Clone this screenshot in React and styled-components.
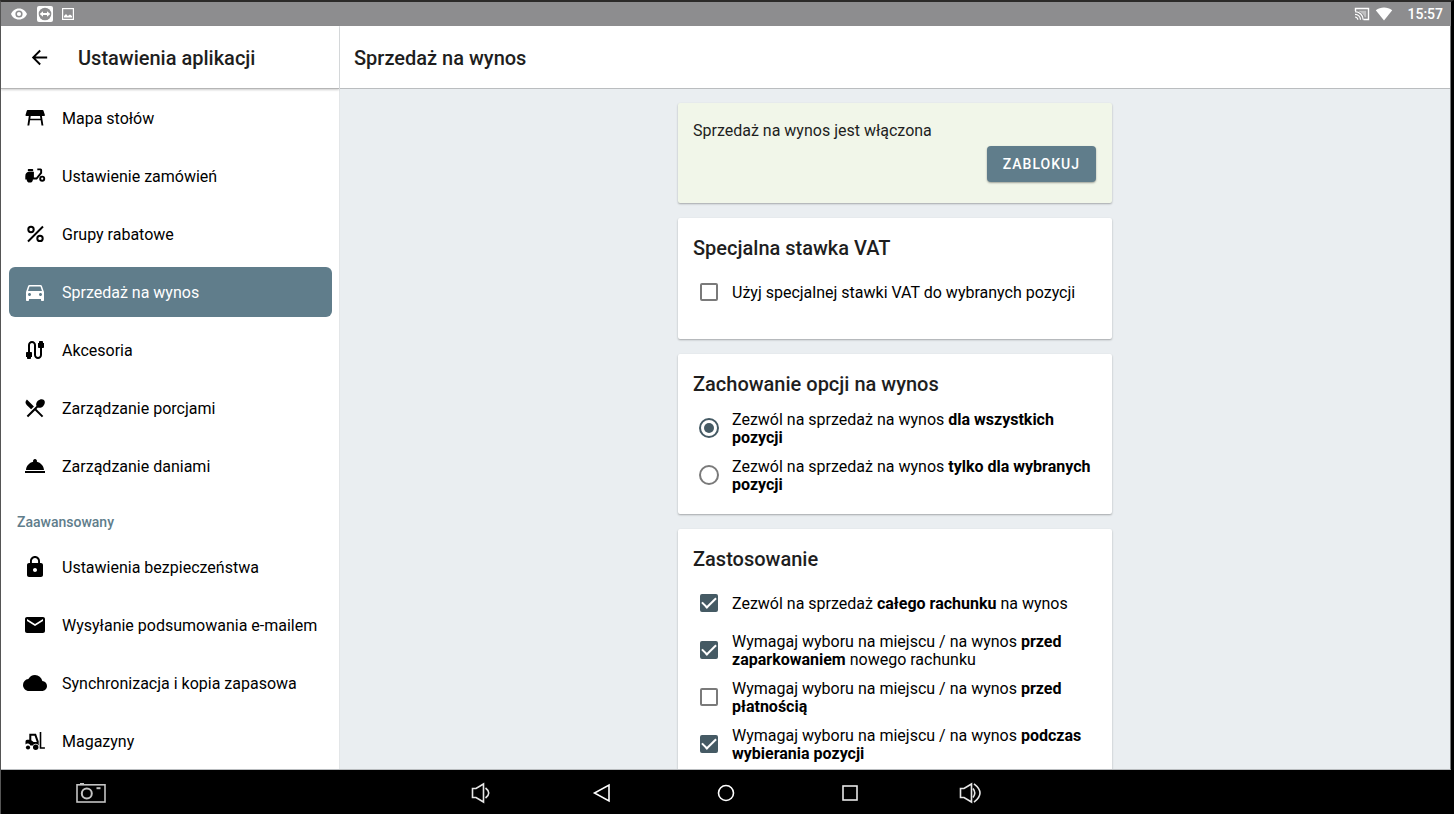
import React, { useState } from 'react';
import styled, { createGlobalStyle } from 'styled-components';
import {
    MdArrowBack,
    MdCable,
    MdCloud,
    MdDirectionsCar,
    MdEmail,
    MdLocalDining,
    MdLock,
    MdRoomService,
} from 'react-icons/md';

// STYLES
const GlobalStyle = createGlobalStyle`
    * {
        box-sizing: border-box;
    }
    body {
        margin: 0;
        background: black;
        font-family: Roboto, "Liberation Sans", sans-serif;
        font-size: 16px;
        color: black;
    }
`

const Screen = styled.div`
    height: 100vh;
    display: flex;
    flex-direction: column;
    overflow: hidden;
    border-top: 2px solid #2b2a29;
    border-left: 1px solid #555555;
    border-right: 3px solid black;
`

const StatusBar = styled.div`
    flex: none;
    height: 24px;
    padding: 0 8px 0 9px;
    display: flex;
    align-items: center;
    background: #8d8d8f;
    color: white;

    svg {
        display: block;
    }
`

const StatusIcons = styled.div`
    display: flex;
    align-items: center;
    gap: ${props => props.$gap}px;
`

const Clock = styled.time`
    font-size: 14px;
    font-weight: 500;
    line-height: 24px;
    margin-left: 14px;
`

const Spacer = styled.div`
    flex: 1;
`

const Body = styled.div`
    flex: 1;
    min-height: 0;
    display: flex;
    border-right: 1px solid #77797a;
    border-bottom: 1px solid #b9bcbf;
`

const Sidebar = styled.aside`
    flex: none;
    width: 339px;
    display: flex;
    flex-direction: column;
    background: white;
    border-right: 1px solid #e3e6e8;
`

const SidebarHeader = styled.header`
    flex: none;
    height: 63px;
    padding: 0 26px;
    display: flex;
    align-items: center;
    gap: 26px;
    border-bottom: 1px solid #b5b5b5;
    box-shadow: 0 1px 2px rgba(0, 0, 0, 0.2);
`

const BackButton = styled.button`
    width: 25px;
    height: 24px;
    padding: 0;
    border: 0;
    background: none;
    color: black;
    font-size: 23px;
    display: flex;
    align-items: center;
    justify-content: center;
`

const Title = styled.h1`
    margin: 0;
    padding-top: 2px;
    font-size: 20px;
    font-weight: 500;
    line-height: 24px;
    color: #1e1e1e;
`

const Menu = styled.nav`
    flex: 1;
    min-height: 0;
    overflow: hidden;
    padding: 4px 7px 4px 8px;
    display: flex;
    flex-direction: column;
    gap: 8px;
`

const MenuItem = styled.a`
    flex: none;
    height: 50px;
    padding: 0 14px;
    display: flex;
    align-items: center;
    gap: 15px;
    border-radius: 6px;
    text-decoration: none;
    white-space: nowrap;
    color: ${props => props.$active ? 'white' : 'black'};
    background: ${props => props.$active ? '#607d8b' : 'none'};

    svg {
        flex: none;
        width: 24px;
        height: 24px;
    }
`

const MenuHeading = styled.h2`
    flex: none;
    margin: 0;
    padding: 13px 8px 2px;
    font-size: 14px;
    font-weight: 500;
    line-height: 20px;
    color: #607d8b;
`

const Main = styled.main`
    flex: 1;
    min-width: 0;
    display: flex;
    flex-direction: column;
    background: #eaeef1;
`

const MainHeader = styled.header`
    flex: none;
    height: 63px;
    padding: 0 14px;
    display: flex;
    align-items: center;
    background: white;
    border-bottom: 1px solid #babdbf;
`

const Cards = styled.div`
    flex: 1;
    min-height: 0;
    overflow: hidden;
    padding-top: 14px;
    display: flex;
    flex-direction: column;
    align-items: center;
    gap: 15px;
`

const Card = styled.section`
    flex: none;
    width: 100%;
    max-width: 434px;
    padding: 15px 16px ${props => props.$bottom || 16}px 15px;
    border-radius: 2px;
    background: ${props => props.$green ? '#f1f6e9' : 'white'};
    box-shadow: 0 1px 2px rgba(0, 0, 0, 0.3);
`

const CardTitle = styled.h2`
    margin: 0 0 5px;
    font-size: 20px;
    font-weight: 500;
    line-height: 30px;
    color: #1e1e1e;
`

const StatusText = styled.p`
    margin: 0;
    line-height: 26px;
    color: #1e1e1e;
`

const Actions = styled.div`
    display: flex;
    justify-content: flex-end;
    margin-top: 2px;
`

const Button = styled.button`
    height: 36px;
    padding: 0 16px;
    border: 0;
    border-radius: 4px;
    background: #607d8b;
    color: white;
    font-family: inherit;
    font-size: 14px;
    font-weight: 500;
    letter-spacing: 1px;
    text-transform: uppercase;
    box-shadow: 0 1px 2px rgba(0, 0, 0, 0.35);
`

const Option = styled.label`
    min-height: 47px;
    padding-left: 6px;
    display: flex;
    align-items: center;
    gap: 13px;
    line-height: 18px;

    span {
        padding-top: 2px;
    }
    b {
        font-weight: 700;
    }
`

const Checkbox = styled.input`
    appearance: none;
    flex: none;
    display: grid;
    place-items: center;
    width: 18px;
    height: 18px;
    margin: 0 1px;
    border: 2px solid #7a7a7a;
    border-radius: 2px;
    background: white;

    &:checked {
        border-color: #455a64;
        background: #455a64;
    }
    &:checked::before {
        content: '';
        width: 12px;
        height: 6px;
        margin-bottom: 4px;
        border-left: 2px solid white;
        border-bottom: 2px solid white;
        transform: rotate(-45deg);
    }
`

const Radio = styled.input`
    appearance: none;
    flex: none;
    display: grid;
    place-items: center;
    width: 20px;
    height: 20px;
    margin: 0;
    border: 2px solid #7a7a7a;
    border-radius: 50%;

    &:checked {
        border-color: #455a64;
    }
    &:checked::before {
        content: '';
        width: 10px;
        height: 10px;
        border-radius: 50%;
        background: #455a64;
    }
`

const NavBar = styled.footer`
    flex: none;
    height: 44px;
    display: grid;
    grid-template-columns: 1fr auto 1fr;
    align-items: center;
    padding: 2px 60px 0;
    background: black;
`

const NavKeys = styled.div`
    display: grid;
    grid-template-columns: 116px repeat(3, 124px) 116px;
    justify-items: center;
`

const NavKey = styled.button`
    width: 60px;
    height: 32px;
    padding: 0;
    border: 0;
    background: none;
    display: flex;
    align-items: center;
    justify-content: center;
`

// ICONS
const TableIcon = () => (
    <svg viewBox="0 0 24 24" fill="currentColor" aria-hidden="true">
        <path d="M4.6 4h15q.7 0 .9.7l1.4 4.4q.2 1-.8 1H3.3q-1 0-.8-1l1.3-4.4q.2-.7.8-.7z" />
        <path d="M5.9 9.500h1.900l-.5 3.300h10.100l-.5-3.300h1.900L20.400 19.600h-1.900l-.8-5.300H7.100l-.8 5.300H4.400z" />
    </svg>
)

const ScooterIcon = () => (
    <svg viewBox="0 0 24 24" fill="currentColor" aria-hidden="true">
        <path d="M5.500 5h4q.7 0 .7.7v.8q0 .7-.7.7h-4q-.7 0-.7-.7v-.8q0-.7.7-.7z" />
        <path d="M6.500 7.800h4.400v5.700h2.300l4-4.900V6.300h-2.900V4.400h3.300q1.500 0 1.500 1.500v3.300L14 15.400H9.900a3.100 3.100 0 0 1-6.200 0H2.300v-3.200a4.400 4.400 0 0 1 4.200-4.400z" />
        <path fillRule="evenodd" d="M19.200 11.700a3 3 0 1 1 0 6 3 3 0 0 1 0-6zm0 1.900a1.100 1.100 0 1 0 0 2.200 1.100 1.100 0 0 0 0-2.200z" />
    </svg>
)

const PercentIcon = () => (
    <svg viewBox="0 0 24 24" fill="none" stroke="currentColor" strokeWidth="2" aria-hidden="true">
        <path d="M5 19.500L20 4.500" />
        <circle cx="8" cy="7.500" r="2.700" />
        <circle cx="17" cy="16.400" r="2.700" />
    </svg>
)

const ForkliftIcon = () => (
    <svg viewBox="0 0 24 24" fill="currentColor" aria-hidden="true">
        <path fillRule="evenodd" d="M6.300 4.800h6.700l2.700 7.400v4h-.3a3.500 3.500 0 0 0-5.700.2H7.400a2.900 2.900 0 0 0-4.900-1v-3q0-1.600 1.600-1.600h2.200zM8.300 6.700v4.500l2.300 1.900h3.200l-2.200-6.400z" />
        <circle cx="5" cy="18.500" r="2.100" />
        <circle cx="12.700" cy="18.200" r="2.700" />
        <path d="M16.700 3h1.600v15.200h3.600v1.500h-5.200z" />
    </svg>
)

const EyeIcon = () => (
    <svg width="18" height="18" viewBox="0 0 18 18" fill="currentColor" aria-hidden="true">
        <path fillRule="evenodd" d="M9 3.500c4 0 6.800 2.500 8 5.500-1.200 3-4 5.500-8 5.500S2.200 12 1 9c1.200-3 4-5.500 8-5.500zm0 1.900a3.600 3.600 0 1 0 0 7.200 3.600 3.600 0 0 0 0-7.200z" />
        <circle cx="9" cy="9" r="2.100" />
    </svg>
)

const RemoteIcon = () => (
    <svg width="16" height="16" viewBox="0 0 16 16" aria-hidden="true">
        <rect width="16" height="16" rx="2" fill="white" />
        <circle cx="8" cy="8" r="6.300" fill="#8d8d8f" />
        <path d="M2.700 8l3.300-2.700v1.800h4V5.300L13.300 8 10 10.700V8.900H6v1.800z" fill="white" />
    </svg>
)

const PictureIcon = () => (
    <svg width="12" height="12" viewBox="0 0 12 12" aria-hidden="true">
        <rect x=".6" y=".6" width="10.800" height="10.800" fill="none" stroke="white" strokeWidth="1.200" />
        <path d="M2 9.500V8l2-2 1.800 2L8 6.500l2 1.500v1.500z" fill="white" />
    </svg>
)

const CastIcon = () => (
    <svg width="16" height="14" viewBox="0 0 16 14" fill="none" stroke="white" aria-hidden="true">
        <path d="M1.500 4V1.500h13v11h-5" strokeWidth="1.400" />
        <path d="M1 4.600a8.200 8.200 0 0 1 8.200 8.200M1 7.300a5.500 5.500 0 0 1 5.500 5.500M1 10a2.800 2.800 0 0 1 2.800 2.800" strokeWidth="1.200" />
        <path d="M5 3.800h7.200v6.500h-1.500A9 9 0 0 0 5 4.500z" fill="white" stroke="none" opacity=".45" />
    </svg>
)

const WifiIcon = () => (
    <svg width="18" height="14" viewBox="0 0 18 14" fill="white" aria-hidden="true">
        <path d="M9 13.500L.8 3.300C5.500-.3 12.500-.3 17.200 3.300z" />
    </svg>
)

const CameraIcon = () => (
    <svg width="30" height="20" viewBox="0 0 30 20" fill="none" stroke="#c4c4c4" strokeWidth="1.600" aria-hidden="true">
        <rect x="1" y="1.800" width="28" height="17.200" />
        <path d="M4 .8h4" />
        <circle cx="10.800" cy="10.500" r="5" strokeWidth="2" />
        <path d="M20.500 5.200h4" strokeWidth="2" />
    </svg>
)

const VolumeIcon = ({ loud }) => (
    <svg width="24" height="22" viewBox="0 0 24 22" fill="none" stroke="#e6e6e6" strokeWidth="1.600" aria-hidden="true">
        <path d="M2.500 6.500H6L13.500 2v18L6 15.500H2.500z" />
        {loud
            ? <path d="M15 6.500q3.600 4.500 0 9M16 1.800q12 9.200 0 18.400" />
            : <path d="M15.500 6q6.500 5 0 10" />}
    </svg>
)

const BackIcon = () => (
    <svg width="20" height="20" viewBox="0 0 20 20" fill="none" stroke="white" strokeWidth="1.600" aria-hidden="true">
        <path d="M17 2v16L2.500 10z" />
    </svg>
)

const HomeIcon = () => (
    <svg width="20" height="20" viewBox="0 0 20 20" fill="none" stroke="white" strokeWidth="1.600" aria-hidden="true">
        <circle cx="10" cy="10" r="7.500" />
    </svg>
)

const RecentIcon = () => (
    <svg width="20" height="20" viewBox="0 0 20 20" fill="none" stroke="#e6e6e6" strokeWidth="1.600" aria-hidden="true">
        <rect x="3" y="3" width="14" height="14" />
    </svg>
)

// DATA
const mainItems = [
    { id: 'stoly', icon: TableIcon, label: 'Mapa stołów' },
    { id: 'zamowienia', icon: ScooterIcon, label: 'Ustawienie zamówień' },
    { id: 'rabaty', icon: PercentIcon, label: 'Grupy rabatowe' },
    { id: 'wynos', icon: MdDirectionsCar, label: 'Sprzedaż na wynos' },
    { id: 'akcesoria', icon: MdCable, label: 'Akcesoria' },
    { id: 'porcje', icon: MdLocalDining, label: 'Zarządzanie porcjami' },
    { id: 'dania', icon: MdRoomService, label: 'Zarządzanie daniami' },
]

const advancedItems = [
    { id: 'bezpieczenstwo', icon: MdLock, label: 'Ustawienia bezpieczeństwa' },
    { id: 'email', icon: MdEmail, label: 'Wysyłanie podsumowania e-mailem' },
    { id: 'kopia', icon: MdCloud, label: 'Synchronizacja i kopia zapasowa' },
    { id: 'magazyny', icon: ForkliftIcon, label: 'Magazyny' },
]

function App() {
    const [active, setActive] = useState('wynos');

    const renderItem = ({ id, icon: Icon, label }) => (
        <MenuItem key={id} href={'#' + id} $active={active === id} onClick={() => setActive(id)}>
            <Icon />
            {label}
        </MenuItem>
    )

    return (
        <Screen>
            <GlobalStyle />

            <StatusBar>
                <StatusIcons $gap={9}>
                    <EyeIcon />
                    <RemoteIcon />
                    <PictureIcon />
                </StatusIcons>
                <Spacer />
                <StatusIcons $gap={5}>
                    <CastIcon />
                    <WifiIcon />
                </StatusIcons>
                <Clock>15:57</Clock>
            </StatusBar>

            <Body>
                <Sidebar>
                    <SidebarHeader>
                        <BackButton aria-label="Wstecz"><MdArrowBack /></BackButton>
                        <Title>Ustawienia aplikacji</Title>
                    </SidebarHeader>
                    <Menu>
                        {mainItems.map(renderItem)}
                        <MenuHeading>Zaawansowany</MenuHeading>
                        {advancedItems.map(renderItem)}
                    </Menu>
                </Sidebar>

                <Main>
                    <MainHeader>
                        <Title>Sprzedaż na wynos</Title>
                    </MainHeader>
                    <Cards>
                        <Card $green $bottom={21}>
                            <StatusText>Sprzedaż na wynos jest włączona</StatusText>
                            <Actions>
                                <Button>Zablokuj</Button>
                            </Actions>
                        </Card>

                        <Card $bottom={24}>
                            <CardTitle>Specjalna stawka VAT</CardTitle>
                            <Option>
                                <Checkbox type="checkbox" />
                                <span>Użyj specjalnej stawki VAT do wybranych pozycji</span>
                            </Option>
                        </Card>

                        <Card>
                            <CardTitle>Zachowanie opcji na wynos</CardTitle>
                            <Option>
                                <Radio type="radio" name="zakres" defaultChecked />
                                <span>Zezwól na sprzedaż na wynos <b>dla wszystkich pozycji</b></span>
                            </Option>
                            <Option>
                                <Radio type="radio" name="zakres" />
                                <span>Zezwól na sprzedaż na wynos <b>tylko dla wybranych pozycji</b></span>
                            </Option>
                        </Card>

                        <Card>
                            <CardTitle>Zastosowanie</CardTitle>
                            <Option>
                                <Checkbox type="checkbox" defaultChecked />
                                <span>Zezwól na sprzedaż <b>całego rachunku</b> na wynos</span>
                            </Option>
                            <Option>
                                <Checkbox type="checkbox" defaultChecked />
                                <span>Wymagaj wyboru na miejscu / na wynos <b>przed zaparkowaniem</b> nowego rachunku</span>
                            </Option>
                            <Option>
                                <Checkbox type="checkbox" />
                                <span>Wymagaj wyboru na miejscu / na wynos <b>przed płatnością</b></span>
                            </Option>
                            <Option>
                                <Checkbox type="checkbox" defaultChecked />
                                <span>Wymagaj wyboru na miejscu / na wynos <b>podczas wybierania pozycji</b></span>
                            </Option>
                        </Card>
                    </Cards>
                </Main>
            </Body>

            <NavBar>
                <NavKey aria-label="Zrzut ekranu"><CameraIcon /></NavKey>
                <NavKeys>
                    <NavKey aria-label="Ciszej"><VolumeIcon /></NavKey>
                    <NavKey aria-label="Wstecz"><BackIcon /></NavKey>
                    <NavKey aria-label="Ekran główny"><HomeIcon /></NavKey>
                    <NavKey aria-label="Ostatnie"><RecentIcon /></NavKey>
                    <NavKey aria-label="Głośniej"><VolumeIcon loud /></NavKey>
                </NavKeys>
            </NavBar>
        </Screen>
    );
}

export default App;
